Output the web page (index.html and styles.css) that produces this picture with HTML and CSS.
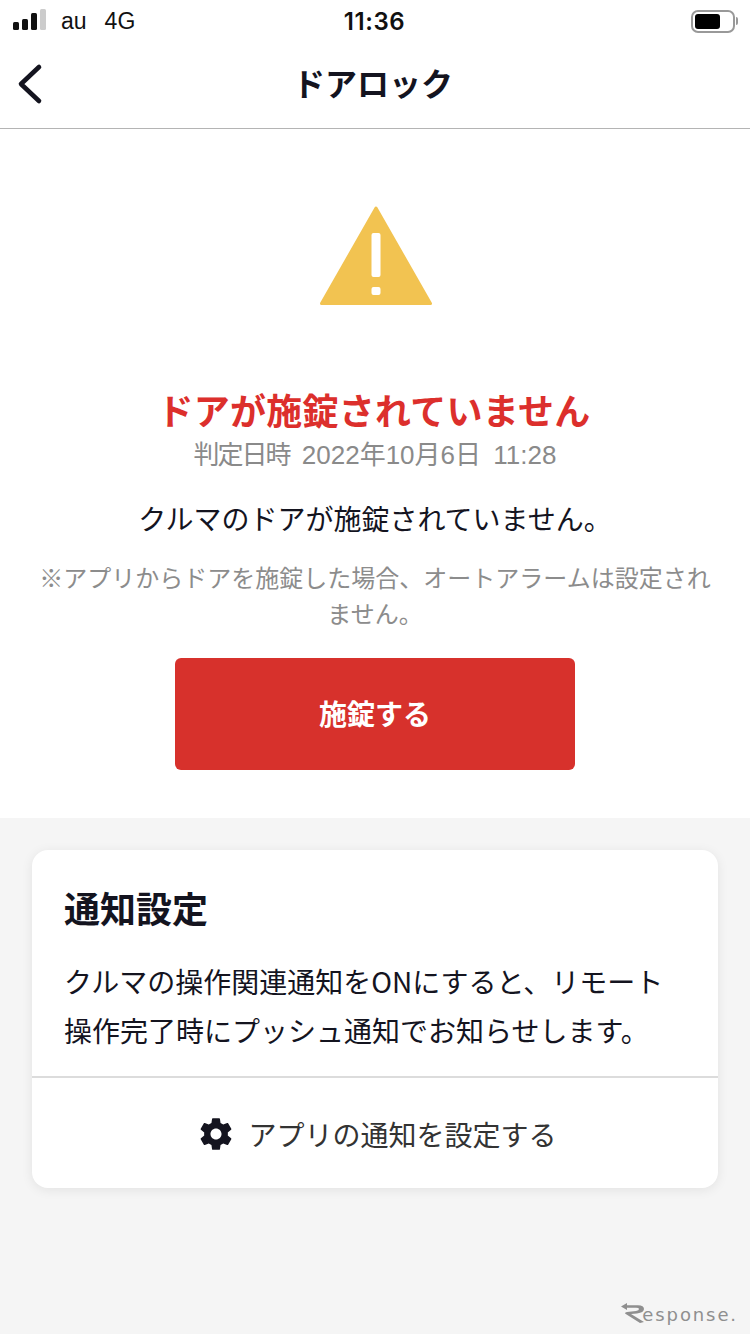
FILE: index.html
```html
<!DOCTYPE html>
<html lang="ja">
	<head>
		<meta charset="utf-8">
		<title>ドアロック</title>
		<link rel="stylesheet" href="styles.css">
	</head>
	<body>
		<div class="status">
			<div class="status-left">
				<div class="signal"><i class="s1"></i><i class="s2"></i><i class="s3"></i><i class="s4"></i></div>
				<span class="carrier">au</span>
				<span class="net">4G</span>
			</div>
			<div class="clock">11:36</div>
			<div class="status-right">
				<div class="battery"><div class="battery-fill"></div></div>
				<div class="battery-cap"></div>
			</div>
		</div>
		<header class="nav">
			<svg class="back" width="26" height="42" viewBox="0 0 26 42"><path d="M22 4 L4 21 L22 38" fill="none" stroke="#14141f" stroke-width="4.6" stroke-linecap="round" stroke-linejoin="round"/></svg>
			<h1 class="nav-title">ドアロック</h1>
		</header>
		<main class="main">
			<svg class="warn" width="116" height="100" viewBox="0 0 116 100">
				<path d="M58 2 L112.500 97.500 H3.500 Z" fill="#f2c351" stroke="#f2c351" stroke-width="3" stroke-linejoin="round"/>
				<rect x="53.500" y="27" width="9" height="44" rx="2" fill="#fff"/>
				<rect x="53.500" y="81" width="9" height="8" rx="2" fill="#fff"/>
			</svg>
			<h2 class="alert">ドアが施錠されていません</h2>
			<p class="date"><span class="date-label">判定日時</span> 2022年10月6日 11:28</p>
			<p class="msg">クルマのドアが施錠されていません。</p>
			<p class="note">※アプリからドアを施錠した場合、オートアラームは設定されません。</p>
			<button class="lock" type="button">施錠する</button>
		</main>
		<section class="lower">
			<div class="card">
				<div class="card-body">
					<h3 class="card-title">通知設定</h3>
					<p class="card-text">クルマの操作関連通知をONにすると、リモート操作完了時にプッシュ通知でお知らせします。</p>
				</div>
				<div class="card-link">
					<svg class="gear" width="38" height="38" viewBox="0 0 24 24"><path fill="#14141f" d="M19.430 12.980c.04-.32.07-.64.07-.98s-.03-.66-.07-.98l2.110-1.650c.19-.15.24-.42.12-.64l-2-3.460c-.12-.22-.39-.3-.61-.22l-2.490 1c-.52-.4-1.080-.73-1.690-.98l-.38-2.650C14.460 2.180 14.250 2 14 2h-4c-.25 0-.46.18-.49.420l-.38 2.650c-.61.25-1.170.59-1.690.98l-2.490-1c-.23-.09-.49 0-.61.22l-2 3.460c-.13.22-.07.49.12.64l2.110 1.650c-.04.32-.07.65-.07.98s.03.66.07.98l-2.110 1.650c-.19.15-.24.42-.12.64l2 3.460c.12.22.39.3.61.22l2.490-1c.52.4 1.080.73 1.690.98l.38 2.650c.03.24.24.42.49.42h4c.25 0 .46-.18.49-.42l.38-2.650c.61-.25 1.170-.59 1.690-.98l2.490 1c.23.09.49 0 .61-.22l2-3.460c.12-.22.07-.49-.12-.64l-2.110-1.650zM12 15.500c-1.930 0-3.500-1.570-3.500-3.500s1.570-3.500 3.500-3.500 3.500 1.570 3.500 3.500-1.570 3.500-3.500 3.500z"/></svg>
					<span class="card-link-text">アプリの通知を設定する</span>
				</div>
			</div>
			<div class="mark">
				<svg class="mark-r" width="24" height="20" viewBox="0 0 24 20"><path d="M0 3.500 L6 0 V2.200 H17 Q23 2.200 23 6 Q23 9.500 16 10.500 L10 11 L23 19 L19 20 L4 10.500 Q4 9 6 9 L15 8 Q18 7.500 18 6 Q18 4.800 15 4.800 H6 V7 Z" fill="#8f8f8f"/></svg>
				<span class="mark-text">esponse.</span>
			</div>
		</section>
	</body>
</html>
```

FILE: styles.css
```css
* {
	box-sizing: border-box;
}
html, body {
	margin: 0;
	padding: 0;
}
body {
	width: 750px;
	height: 1334px;
	overflow: hidden;
	background: #f5f5f5;
	color: #14141f;
	font-family: "Noto Sans CJK JP", "Liberation Sans", sans-serif;
}
h1, h2, h3, p {
	margin: 0;
	font-weight: normal;
}
.status {
	height: 42px;
	padding: 0 12px 0 13px;
	display: flex;
	align-items: center;
	justify-content: space-between;
	background: #fff;
	color: #111;
	font-family: "Liberation Sans", sans-serif;
}
.status-left {
	display: flex;
	align-items: center;
	width: 200px;
	font-size: 23px;
}
.signal {
	display: flex;
	align-items: flex-end;
	gap: 3px;
	height: 21px;
	margin-bottom: 3px;
}
.signal i {
	width: 6px;
	border-radius: 1.500px;
	background: #111;
}
.signal .s1 { height: 8px; }
.signal .s2 { height: 11px; }
.signal .s3 { height: 17px; }
.signal .s4 { height: 21px; background: #ccc; }
.carrier {
	margin-left: 15px;
}
.net {
	margin-left: 18px;
}
.clock {
	margin-right: 2px;
	font-family: Inter, "Liberation Sans", sans-serif;
	font-size: 24px;
	font-weight: 600;
	letter-spacing: .6px;
}
.status-right {
	width: 200px;
	display: flex;
	align-items: center;
	justify-content: flex-end;
	gap: 1px;
}
.battery {
	width: 44px;
	height: 23px;
	padding: 2px;
	border: 2px solid #999;
	border-radius: 7px;
}
.battery-fill {
	width: 25px;
	height: 100%;
	background: #000;
	border-radius: 3px;
}
.battery-cap {
	width: 2px;
	height: 8px;
	background: #999;
	border-radius: 0 2px 2px 0;
}
.nav {
	height: 87px;
	padding: 0 4px 6px 0;
	display: flex;
	align-items: center;
	justify-content: center;
	position: relative;
	background: #fff;
	border-bottom: 1px solid #b4b4b4;
}
.back {
	position: absolute;
	left: 17px;
	top: 21px;
}
.nav-title {
	font-size: 32px;
	font-weight: bold;
	line-height: 44px;
}
.main {
	height: 689px;
	padding-top: 77px;
	display: flex;
	flex-direction: column;
	align-items: center;
	background: #fff;
}
.warn {
	display: block;
	margin-left: 2px;
}
.alert {
	margin: 78px 2px 0 0;
	font-size: 36px;
	font-weight: bold;
	line-height: 50px;
	letter-spacing: .25px;
	color: #dc2f2c;
}
.date {
	margin-top: 3px;
	font-family: "Liberation Sans", "Noto Sans CJK JP", sans-serif;
	font-size: 26px;
	line-height: 36px;
	word-spacing: 5px;
	color: #8a8a8a;
}
.date-label {
	letter-spacing: -2px;
}
.msg {
	margin-top: 24px;
	font-size: 28px;
	line-height: 42px;
}
.note {
	margin-top: 20px;
	width: 680px;
	font-size: 24px;
	line-height: 36px;
	text-align: center;
	color: #8c8c8c;
}
.lock {
	margin-top: 27px;
	width: 400px;
	height: 112px;
	padding: 0 0 2px;
	border: none;
	border-radius: 6px;
	background: #d7312c;
	color: #fff;
	font: bold 28px "Noto Sans CJK JP", sans-serif;
}
.lower {
	height: 516px;
	padding: 32px 32px 0;
	position: relative;
}
.card {
	height: 338px;
	background: #fff;
	border-radius: 16px;
	box-shadow: 0 2px 12px rgba(0, 0, 0, .08);
}
.card-body {
	height: 228px;
	padding: 31px 32px 0;
	border-bottom: 2px solid #dcdcdc;
}
.card-title {
	font-size: 36px;
	font-weight: bold;
	line-height: 52px;
}
.card-text {
	margin-top: 24px;
	font-size: 28px;
	line-height: 49px;
}
.card-link {
	height: 110px;
	padding: 2px 0 0 4px;
	display: flex;
	align-items: center;
	justify-content: center;
	gap: 13px;
}
.card-link-text {
	font-size: 28px;
	color: #333;
}
.mark {
	position: absolute;
	right: 12px;
	bottom: 11px;
	display: flex;
	align-items: flex-end;
}
.mark-text {
	margin-left: -3px;
	font: 18px/16px "DejaVu Sans", sans-serif;
	letter-spacing: 1.900px;
	color: #8f8f8f;
}
```
